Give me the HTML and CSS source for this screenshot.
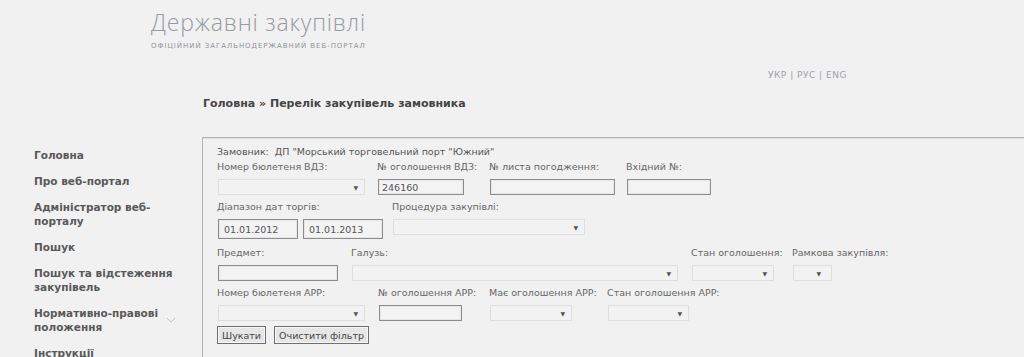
FILE: index.html
```html
<!DOCTYPE html>
<html lang="uk">
<head>
    <meta charset="UTF-8">
    <meta name="viewport" content="width=device-width, initial-scale=1.0">
    <title>Державні закупівлі</title>
    <link rel="stylesheet" href="styles.css">
</head>
<body>
    <div class="header">
        <div class="logo">Державні закупівлі</div>
        <div class="slogan">Офіційний загальнодержавний веб-портал</div>
    </div>

    <div class="langs">УКР | РУС | ENG</div>

    <div class="crumbs">Головна » Перелік закупівель замовника</div>

    <div class="page">
        <ul class="menu">
            <li>Головна</li>
            <li>Про веб-портал</li>
            <li>Адміністратор веб-<br>порталу</li>
            <li>Пошук</li>
            <li>Пошук та відстеження<br>закупівель</li>
            <li class="has-sub">Нормативно-правові<br>положення
                <svg class="chevron" width="10" height="6" viewBox="0 0 10 6"><polyline points="1,1 5,5 9,1" fill="none" stroke="#c4c4c4" stroke-width="1"/></svg>
            </li>
            <li>Інструкції</li>
        </ul>

        <div class="filter">
            <div class="customer">Замовник:&nbsp; ДП "Морський торговельний порт "Южний"</div>

            <!-- рядок 1 -->
            <div class="row">
                <div class="field w160">
                    <label>Номер бюлетеня ВДЗ:</label>
                    <div class="select s147"><span>▼</span></div>
                </div>
                <div class="field w112">
                    <label>№ оголошення ВДЗ:</label>
                    <input type="text" class="i86" value="246160">
                </div>
                <div class="field w137">
                    <label>№ листа погодження:</label>
                    <input type="text" class="i125">
                </div>
                <div class="field">
                    <label>Вхідний №:</label>
                    <input type="text" class="i84">
                </div>
            </div>

            <!-- рядок 2 -->
            <div class="row tall">
                <div class="field w175">
                    <label>Діапазон дат торгів:</label>
                    <div class="dates">
                        <input type="text" class="date" value="01.01.2012">
                        <input type="text" class="date" value="01.01.2013">
                    </div>
                </div>
                <div class="field">
                    <label>Процедура закупівлі:</label>
                    <div class="select s192"><span>▼</span></div>
                </div>
            </div>

            <!-- рядок 3 -->
            <div class="row">
                <div class="field w134">
                    <label>Предмет:</label>
                    <input type="text" class="i120">
                </div>
                <div class="field w340">
                    <label>Галузь:</label>
                    <div class="select s326"><span>▼</span></div>
                </div>
                <div class="field w101">
                    <label>Стан оголошення:</label>
                    <div class="select s82"><span>▼</span></div>
                </div>
                <div class="field">
                    <label>Рамкова закупівля:</label>
                    <div class="select s39"><span>▼</span></div>
                </div>
            </div>

            <!-- рядок 4 -->
            <div class="row">
                <div class="field w161">
                    <label>Номер бюлетеня АРР:</label>
                    <div class="select s147"><span>▼</span></div>
                </div>
                <div class="field w111">
                    <label>№ оголошення АРР:</label>
                    <input type="text" class="i83">
                </div>
                <div class="field w118">
                    <label>Має оголошення АРР:</label>
                    <div class="select s82"><span>▼</span></div>
                </div>
                <div class="field">
                    <label>Стан оголошення АРР:</label>
                    <div class="select s81"><span>▼</span></div>
                </div>
            </div>

            <div class="buttons">
                <button>Шукати</button>
                <button>Очистити фільтр</button>
            </div>
        </div>
    </div>
</body>
</html>
```

FILE: styles.css
```css
body {
    margin: 0;
    background-color: #f1f1f1;
    font-family: "DejaVu Sans", Verdana, sans-serif;
    color: #555;
    overflow: hidden;
}
.header {
    padding: 9px 0 0 151px;
    height: 60px;
}
.logo {
    font-family: "Open Sans", "DejaVu Sans", sans-serif;
    font-weight: 300;
    font-size: 23px;
    line-height: 26px;
    color: #979aa3;
    letter-spacing: 0.8px;
}
.slogan {
    font-size: 7px;
    text-transform: uppercase;
    color: #8f929a;
    margin-top: 7px;
    letter-spacing: 0.95px;
}
.langs {
    padding-left: 768px;
    font-size: 9px;
    letter-spacing: 0.5px;
    color: #9fa2aa;
    line-height: 12px;
    height: 28px;
}
.crumbs {
    padding-left: 203px;
    font-size: 11px;
    font-weight: bold;
    color: #454545;
    line-height: 14px;
    height: 40px;
}
.page {
    display: flex;
}
.menu {
    list-style: none;
    margin: 0;
    padding: 11px 0 0 34px;
    width: 202px;
    flex-shrink: 0;
    box-sizing: border-box;
}
.menu li {
    position: relative;
    font-size: 10.5px;
    font-weight: bold;
    color: #595959;
    line-height: 14px;
    margin-bottom: 12px;
}
.chevron {
    position: absolute;
    left: 132px;
    top: 11px;
}
.filter {
    width: 860px;
    flex-shrink: 0;
    border: 1px solid #b4b4b4;
    box-shadow: 0 1px 0 #d8d8d8, inset 0 1px 0 #e2e2e2;
    padding: 7px 0 7px 14px;
    font-size: 9.5px;
    color: #666;
}
.customer {
    color: #555;
    line-height: 14px;
    margin-bottom: 1px;
}
.row {
    display: flex;
    margin-bottom: 5px;
}
.row.tall {
    margin-bottom: 7px;
}
.field {
    display: flex;
    flex-direction: column;
}
.field label {
    line-height: 14px;
    margin-bottom: 5px;
    white-space: nowrap;
}
.w160 { width: 160px; }
.w112 { width: 112px; }
.w137 { width: 137px; }
.w175 { width: 175px; }
.w134 { width: 134px; }
.w340 { width: 340px; }
.w101 { width: 101px; }
.w161 { width: 161px; }
.w111 { width: 111px; }
.w118 { width: 118px; }

input[type="text"] {
    box-sizing: border-box;
    height: 16px;
    margin: 0 0 0 1px;
    padding: 0 3px;
    border: 1px solid #8c8c8c;
    box-shadow: inset 0 0 0 1px #e6e6e6;
    background-color: #f3f3f3;
    font-family: "DejaVu Sans", Verdana, sans-serif;
    font-size: 9.5px;
    color: #555;
}
.i86 { width: 86px; }
.i125 { width: 125px; }
.i84 { width: 84px; }
.i120 { width: 120px; }
.i83 { width: 83px; }
.dates {
    display: flex;
    gap: 4px;
}
input.date {
    width: 80px;
    height: 20px;
    padding: 0 5px;
}
.select {
    box-sizing: border-box;
    height: 16px;
    margin-left: 1px;
    border: 1px solid #dedede;
    background-color: #f2f2f2;
    display: flex;
    align-items: center;
    justify-content: flex-end;
    padding-right: 6px;
}
.select span {
    font-size: 6px;
    color: #555;
}
.s147 { width: 147px; }
.s192 { width: 192px; }
.s326 { width: 326px; }
.s82 { width: 82px; }
.s81 { width: 81px; }
.s39 { width: 39px; padding-right: 10px; }
.buttons {
    display: flex;
    gap: 8px;
    margin-top: 1px;
}
button {
    height: 18px;
    padding: 0 4px;
    border: 1px solid #6f6f6f;
    box-shadow: inset 0 0 0 1px #f7f7f7;
    background-color: #e6e6e6;
    font-family: "DejaVu Sans", Verdana, sans-serif;
    font-size: 9.5px;
    color: #444;
}
```
